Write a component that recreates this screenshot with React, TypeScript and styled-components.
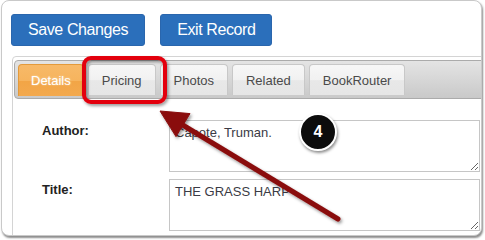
import React from "react";
import styled, { createGlobalStyle } from "styled-components";

const GlobalStyle = createGlobalStyle`
  html, body {
    margin: 0;
    padding: 0;
    background: #fff;
  }
  body {
    font-family: "Liberation Sans", Arial, sans-serif;
  }
`;

const Stage = styled.div`
  position: relative;
  width: 485px;
  height: 240px;
  overflow: hidden;
`;

const Card = styled.div`
  box-sizing: border-box;
  margin-left: 1px;
  width: 481px;
  height: 236px;
  border: 1px solid #c9c9c9;
  border-radius: 8px;
  background: #fff;
  box-shadow: 1px 2px 2px rgba(0, 0, 0, 0.45);
  overflow: hidden;
`;

const Toolbar = styled.div`
  display: flex;
  gap: 15px;
  padding: 13px 0 0 9px;
`;

const Button = styled.button`
  height: 32px;
  padding: 0 16px;
  border: 1px solid #2a66ad;
  border-radius: 3px;
  background: #2b6fbb;
  color: #fff;
  font-family: "Liberation Sans", Arial, sans-serif;
  font-size: 16px;
  letter-spacing: -0.4px;
  cursor: pointer;
`;

const Panel = styled.div`
  box-sizing: border-box;
  margin: 10px 0 0 10px;
  width: 520px;
  height: 240px;
  border: 1px solid #d4d4d4;
  border-radius: 4px;
  padding: 3px 1px;
`;

const TabNav = styled.ul`
  display: flex;
  gap: 4px;
  margin: 0;
  padding: 3px 0 0 3px;
  height: 34px;
  list-style: none;
  border: 1px solid #ababab;
  border-radius: 4px;
  background: linear-gradient(#e4e4e4, #c9c9c9);
`;

const Tab = styled.li<{ $active?: boolean }>`
  box-sizing: border-box;
  display: flex;
  align-items: center;
  height: ${(p) => (p.$active ? "32px" : "31px")};
  padding: 0 ${(p) => (p.$active ? "12px" : "13px")};
  border: 1px solid ${(p) => (p.$active ? "#e39a3b" : "#c8c8c8")};
  border-bottom: none;
  border-radius: 4px 4px 0 0;
  font-size: 13px;
  color: ${(p) => (p.$active ? "#fff" : "#4a4a4a")};
  text-shadow: ${(p) => (p.$active ? "0 0 2px rgba(255,255,255,0.6)" : "none")};
  background: ${(p) =>
    p.$active
      ? "linear-gradient(#f7b968 0%, #f6b45e 50%, #f2a546 52%, #f3a94e 100%)"
      : "linear-gradient(#f7f7f7 0%, #f1f1f1 50%, #e8e8e8 52%, #e6e6e6 100%)"};
`;

const Content = styled.div`
  padding: 21px 0 0 28px;
`;

const Form = styled.div`
  display: grid;
  grid-template-columns: 127px 311px;
  row-gap: 7px;
`;

const Label = styled.label`
  padding-top: 3px;
  font-size: 13px;
  line-height: 16px;
  font-weight: bold;
  color: #222;
`;

const Field = styled.textarea`
  box-sizing: border-box;
  display: block;
  width: 311px;
  height: 52px;
  margin: 0;
  padding: 4px 5px;
  border: 1px solid #c6c6c6;
  border-radius: 0;
  font-family: "Liberation Sans", Arial, sans-serif;
  font-size: 13px;
  line-height: 16px;
  color: #3b3b45;
  background: #fff;
  outline: none;
`;

const Overlay = styled.svg`
  position: absolute;
  left: 0;
  top: 0;
  pointer-events: none;
`;

const Badge = styled.div`
  position: absolute;
  left: 299px;
  top: 113px;
  box-sizing: border-box;
  width: 38px;
  height: 38px;
  border: 2px solid #fff;
  border-radius: 50%;
  background: #0c0c0c;
  box-shadow: 1px 2px 3px rgba(0, 0, 0, 0.45);
  display: flex;
  align-items: center;
  justify-content: center;
  color: #fff;
  font-size: 16px;
  font-weight: bold;
`;

const tabs = ["Details", "Pricing", "Photos", "Related", "BookRouter"];

export default function App() {
  return (
    <>
      <GlobalStyle />
      <Stage>
        <Card>
          <Toolbar>
            <Button>Save Changes</Button>
            <Button>Exit Record</Button>
          </Toolbar>
          <Panel>
            <TabNav>
              {tabs.map((t, i) => (
                <Tab key={t} $active={i === 0}>
                  {t}
                </Tab>
              ))}
            </TabNav>
            <Content>
              <Form>
                <Label>Author:</Label>
                <Field readOnly defaultValue="Capote, Truman." />
                <Label>Title:</Label>
                <Field readOnly defaultValue="THE GRASS HARP" />
              </Form>
            </Content>
          </Panel>
        </Card>

        <Overlay width="485" height="240" viewBox="0 0 485 240">
          <defs>
            <filter id="shade" x="-20%" y="-20%" width="140%" height="140%">
              <feDropShadow dx="1.5" dy="2" stdDeviation="1.5" floodColor="#000" floodOpacity="0.4" />
            </filter>
          </defs>
          <rect
            x="84"
            y="58"
            width="81"
            height="44"
            rx="7"
            fill="none"
            stroke="#e3000f"
            strokeWidth="4"
            filter="url(#shade)"
          />
          <g filter="url(#shade)" fill="#8a0d0d" stroke="#8a0d0d">
            <line x1="338" y1="219" x2="181" y2="124" strokeWidth="5" strokeLinecap="round" />
            <polygon points="160,111 190,113.6 176,136.6" strokeWidth="1" strokeLinejoin="round" />
          </g>
        </Overlay>

        <Badge>4</Badge>
      </Stage>
    </>
  );
}
